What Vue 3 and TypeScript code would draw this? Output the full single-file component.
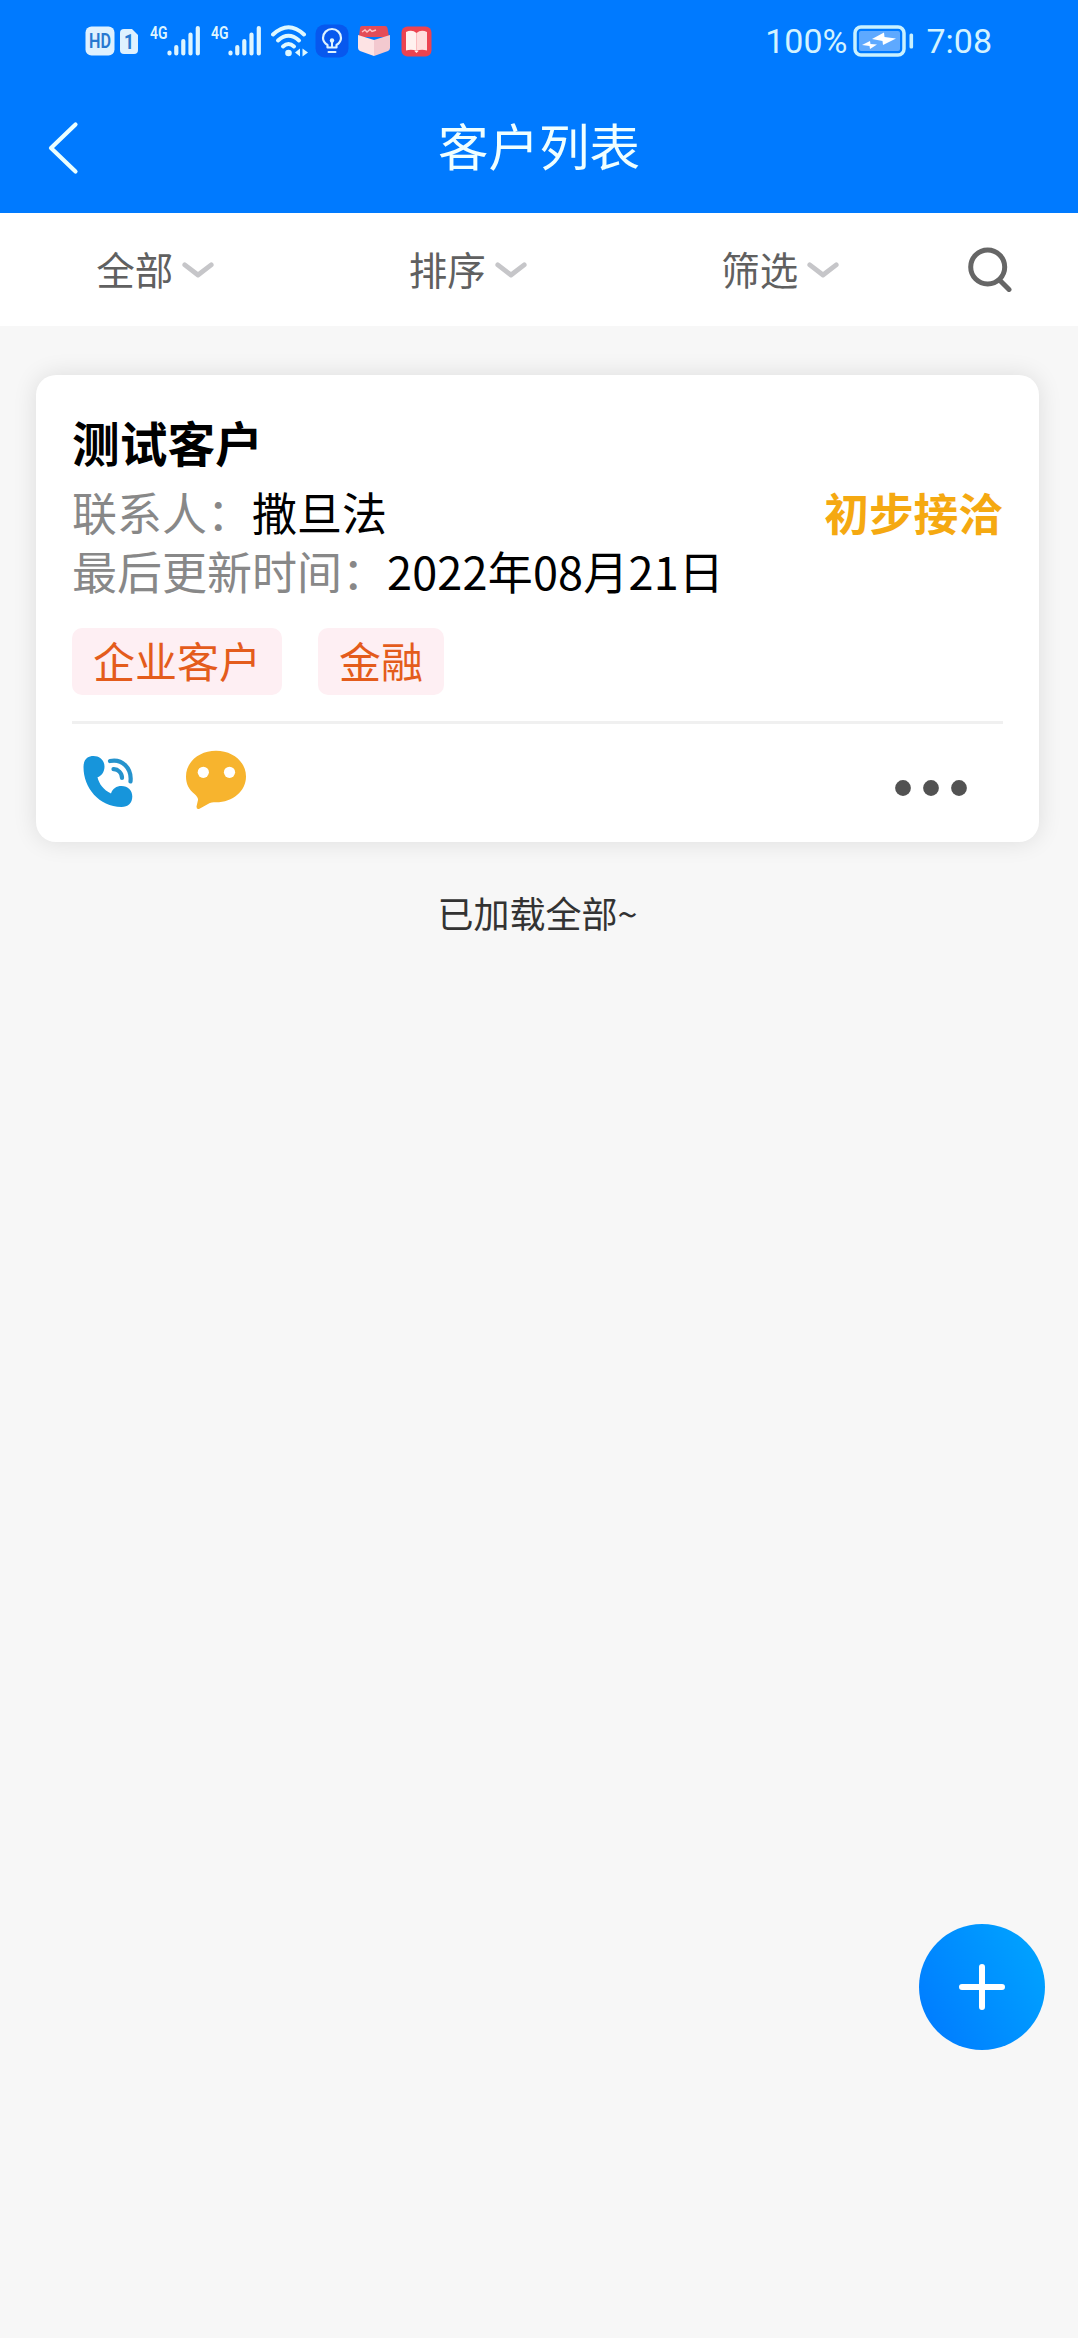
<script setup lang="ts">
interface Customer {
  name: string
  contact: string
  stage: string
  updated: string
  tags: string[]
}

const filters: string[] = ['全部', '排序', '筛选']

const customers: Customer[] = [
  {
    name: '测试客户',
    contact: '撒旦法',
    stage: '初步接洽',
    updated: '2022年08月21日',
    tags: ['企业客户', '金融'],
  },
]
</script>

<template>
  <div class="page">
    <header class="header">
      <div class="status">
        <div class="status-left">
          <svg class="badge-hd" width="30" height="30" viewBox="0 0 30 30">
            <rect x="0.5" y="0.5" width="29" height="29" rx="6" fill="#def1ff" />
            <text x="4" y="22" textLength="22" lengthAdjust="spacingAndGlyphs" font-size="20" font-weight="600" fill="#2878d0">HD</text>
          </svg>
          <svg class="badge-sim" width="18" height="25" viewBox="0 0 18 25">
            <path d="M4 0H12L18 6V21Q18 25 14 25H4Q0 25 0 21V4Q0 0 4 0Z" fill="#def1ff" />
            <text x="4" y="20" font-size="20" font-weight="700" fill="#2878d0" textLength="10" lengthAdjust="spacingAndGlyphs">1</text>
          </svg>
          <svg v-for="n in 2" :key="n" class="signal" width="51" height="48" viewBox="0 -8 51 48">
            <text x="0" y="14" textLength="17.500" lengthAdjust="spacingAndGlyphs" font-size="18.500" font-weight="600" fill="#def5ff">4G</text>
            <g stroke="#def5ff" stroke-width="4.2" stroke-linecap="round">
              <path d="M19.5 27.5V28.5M26.3 22V28.5M33.3 16V28.5M40.5 9.5V28.5M47.8 3V28.5" />
            </g>
          </svg>
          <svg class="wifi" width="38" height="32" viewBox="0 0 38 32">
            <g fill="none" stroke="#def8ff" stroke-width="4" stroke-linecap="round">
              <path d="M2 9.5Q17.500 -5 33 9.500" />
              <path d="M7 15.500Q17.500 6 28 15.500" />
              <path d="M12 21.500Q17.500 16.500 23 21.500" />
            </g>
            <circle cx="17.500" cy="28" r="3.300" fill="#def8ff" />
            <path d="M24 27.500L29 23.500V31.500ZM37 27.500L31.500 23.500V31.500Z" fill="#def8ff" />
          </svg>
          <svg class="bulb" width="34" height="34" viewBox="0 0 34 34">
            <rect x="0.500" y="0.500" width="33" height="33" rx="9" fill="#0758ee" />
            <path d="M12.500 23.500V21Q8 18 8 14A9 9 0 0 1 26 14Q26 18 21.500 21V23.500Z" fill="none" stroke="#def3ff" stroke-width="2.200" stroke-linejoin="round" />
            <circle cx="17" cy="16.500" r="2.200" fill="#def3ff" />
            <path d="M17 17V23M13.500 28H20.500" stroke="#def3ff" stroke-width="2" stroke-linecap="round" />
          </svg>
          <svg class="box" width="34" height="32" viewBox="0 0 34 32">
            <path d="M5 1H28Q30 1 30.500 3L32 12H2L3 3Q3 1 5 1Z" fill="#e44c58" />
            <path d="M5 7L8 5L10 7L13 4.500L15 6.500L19 5" fill="none" stroke="#ffc4c8" stroke-width="1.500" />
            <path d="M1 10L17 15V31L3 26Q1 25 1 23Z" fill="#fde3e4" />
            <path d="M33 10L17 15V31L31 26Q33 25 33 23Z" fill="#f3c9cf" />
          </svg>
          <svg class="book" width="31" height="31" viewBox="0 0 31 31">
            <rect x="0.500" y="0.500" width="30" height="30" rx="6" fill="#ec4350" />
            <path d="M5 6Q11 3 15.500 7V25Q11 23 5 24.500Z" fill="#fff1ef" />
            <path d="M26 6Q20 3 15.500 7V25Q20 23 26 24.500Z" fill="#ffdedd" />
            <path d="M13.500 25H17.500L15.500 27Z" fill="#fff1ef" />
          </svg>
        </div>
        <div class="status-right">
          <span class="percent">100%</span>
          <svg class="battery" width="61" height="32" viewBox="0 0 61 32">
            <rect x="2" y="2" width="49" height="28" rx="6" fill="none" stroke="#c9f1ff" stroke-width="3.500" />
            <rect x="6" y="6" width="41" height="20" rx="2" fill="#5ea9ff" />
            <path d="M19 14L31 7.500L31.500 12L43 13.500L30 20L29.500 16Z" fill="#fff" />
            <path d="M9 20L17 16L17.500 19L24 19.500L17 24L16.500 21Z" fill="#fff" />
            <rect x="56.500" y="8.500" width="3.600" height="15" rx="1.500" fill="#c9f1ff" />
          </svg>
          <span class="clock">7:08</span>
        </div>
      </div>
      <div class="nav">
        <svg class="back" width="34" height="56" viewBox="0 0 34 56">
          <path d="M29.500 4.500L5 28L29.500 51.500" fill="none" stroke="#eaffff" stroke-width="4.200" stroke-linecap="round" stroke-linejoin="round" />
        </svg>
        <h1>客户列表</h1>
      </div>
    </header>

    <nav class="filters">
      <button v-for="label in filters" :key="label" class="filter">
        <span>{{ label }}</span>
        <svg width="32" height="18" viewBox="0 0 32 18">
          <path d="M2.800 3.800L16 14L29.200 3.800" fill="none" stroke="#c6c6c9" stroke-width="4.800" stroke-linecap="round" stroke-linejoin="round" />
        </svg>
      </button>
      <button class="search">
        <svg width="44" height="45" viewBox="0 0 44 45">
          <circle cx="19.700" cy="20" r="17" fill="none" stroke="#666" stroke-width="5" />
          <path d="M31.500 33L41 42.500" stroke="#666" stroke-width="5" stroke-linecap="round" />
        </svg>
      </button>
    </nav>

    <main class="list">
      <article v-for="c in customers" :key="c.name" class="card">
        <h2>{{ c.name }}</h2>
        <div class="row">
          <p><span class="label">联系人：</span>{{ c.contact }}</p>
          <strong>{{ c.stage }}</strong>
        </div>
        <div class="row">
          <p><span class="label">最后更新时间：</span><span class="date">{{ c.updated }}</span></p>
        </div>
        <div class="tags">
          <span v-for="t in c.tags" :key="t" class="tag">{{ t }}</span>
        </div>
        <div class="actions">
          <svg class="phone" width="51" height="53" viewBox="0 0 51 53">
            <path d="M0.500 12C0.500 4 5 1 10.500 1C17 1 21.500 5.500 21.500 11.500C21.500 17 18.500 21 14.500 22.300C16 29 20.500 35 28 38.500C29.500 33.500 33.500 31 38.500 31C45 31 49.300 35.500 49.300 41.500C49.300 48 45 52 38.500 52C16 51.500 0.500 33 0.500 12Z" fill="#1795db" />
            <path d="M27 6C39 3.500 49 13 47.500 26.500M30.500 14.200C35 14 39 18 39 23" fill="none" stroke="#2693cd" stroke-width="4.200" stroke-linecap="round" />
          </svg>
          <svg class="chat" width="62" height="60" viewBox="0 0 62 60">
            <path d="M31 0.700C48 0.700 61 12 61 26.500C61 41 48 52.300 31 52.300C28 52.300 25.500 52.500 23 54L14.500 58.800Q11.500 60 11.500 56.500L13 50C13.200 48 12 46.500 9.500 44C4 39.500 1 34 1 26.500C1 12 14 0.700 31 0.700Z" fill="#f7b42e" />
            <circle cx="18.300" cy="22.300" r="5.600" fill="#fff" />
            <circle cx="44.500" cy="22.300" r="5.600" fill="#fff" />
          </svg>
          <svg class="more" width="72" height="16" viewBox="0 0 72 16">
            <g fill="#525252">
              <circle cx="8" cy="8" r="7.900" />
              <circle cx="36" cy="8" r="7.900" />
              <circle cx="64" cy="8" r="7.900" />
            </g>
          </svg>
        </div>
      </article>
      <p class="end">已加载全部~</p>
    </main>

    <button class="fab">
      <svg width="48" height="48" viewBox="0 0 48 48">
        <path d="M24 4V44M4 24H44" stroke="#fff" stroke-width="6" stroke-linecap="round" />
      </svg>
    </button>
  </div>
</template>

<style>
body {
  background: #f7f7f7;
}
</style>

<style scoped>
.page {
  min-height: 2338px;
  background: #f7f7f7;
  color: #000;
  font-family: "Noto Sans CJK SC", sans-serif;
}
h1,
h2,
p {
  margin: 0;
}
svg {
  display: block;
  flex: none;
}
button {
  border: 0;
  padding: 0;
  background: none;
  font: inherit;
  color: inherit;
}
.header {
  height: 213px;
  background: #007aff;
}
.status {
  display: flex;
  justify-content: space-between;
  height: 82px;
  padding: 0 86px 0 85px;
  box-sizing: border-box;
  font-family: Roboto, sans-serif;
}
.status-left,
.status-right {
  display: flex;
  align-items: center;
}
.badge-sim {
  margin-left: 5px;
}
.signal {
  margin-left: 12px;
}
.signal + .signal {
  margin-left: 10px;
}
.wifi {
  margin-left: 9px;
}
.bulb {
  margin-left: 6px;
}
.box {
  margin-left: 8px;
}
.book {
  margin-left: 10px;
}
.status-right {
  color: #d3f3ff;
  font-size: 34px;
}
.battery {
  margin: 0 12px 0 6px;
}
.nav {
  display: grid;
  grid-template-columns: 100px 1fr 100px;
  align-items: center;
  height: 131px;
}
.back {
  margin-left: 46px;
}
h1 {
  padding-bottom: 8px;
  text-align: center;
  font-size: 50.500px;
  font-weight: 400;
  line-height: 74px;
  color: #f0ffff;
}
.filters {
  display: flex;
  height: 113px;
  background: #fff;
  color: #606060;
  font-size: 38.500px;
}
.filter {
  display: flex;
  align-items: center;
  justify-content: center;
  gap: 9px;
  width: 312.500px;
  padding-right: 2px;
  box-sizing: border-box;
}
.filter span {
  padding-bottom: 3px;
}
.search {
  display: flex;
  align-items: center;
  padding-left: 30px;
}
.list {
  padding: 49px 39px 0 36px;
}
.card {
  height: 467px;
  box-sizing: border-box;
  padding: 33px 36px;
  border-radius: 20px;
  background: #fff;
  box-shadow: 0 0 24px rgba(0, 0, 0, 0.11);
}
h2 {
  margin-bottom: 6px;
  font-size: 47.700px;
  font-weight: 700;
  line-height: 68px;
}
.row {
  display: flex;
  justify-content: space-between;
  height: 59px;
  line-height: 59px;
  font-size: 45px;
}
.row strong {
  color: #f5a911;
  font-size: 44.700px;
}
.label {
  color: #888;
}
.date {
  letter-spacing: 0.200px;
}
.tags {
  display: flex;
  gap: 36px;
  margin-top: 28px;
}
.tag {
  height: 67px;
  padding: 0 21px;
  border-radius: 10px;
  background: #feeff3;
  color: #e45c1c;
  font-size: 42px;
  line-height: 64px;
}
.actions {
  display: flex;
  align-items: flex-start;
  margin-top: 26px;
  border-top: 3px solid #f0f0f0;
}
.phone {
  margin: 31px 0 0 11px;
}
.chat {
  margin: 26px 0 0 51px;
}
.more {
  margin: 56px 36px 0 auto;
}
.end {
  margin-top: 44px;
  text-align: center;
  font-size: 36px;
  line-height: 52px;
  color: #333;
}
.fab {
  position: fixed;
  left: 919px;
  top: 1924px;
  display: flex;
  align-items: center;
  justify-content: center;
  width: 126px;
  height: 126px;
  border-radius: 50%;
  background: linear-gradient(60deg, #007fff 15%, #00a2ff 90%);
}
</style>
